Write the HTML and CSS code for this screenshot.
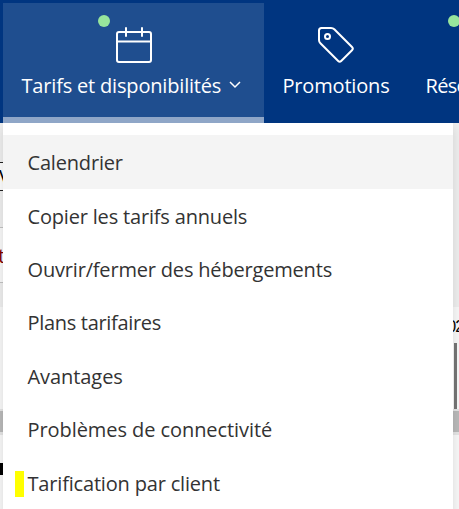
FILE: index.html
```html
<!DOCTYPE html>
<html lang="fr">
<head>
    <meta charset="UTF-8">
    <title>Tarifs et disponibilités</title>
    <link rel="stylesheet" href="styles.css">
</head>
<body>
    <nav class="navbar">
        <a class="nav-item active" href="#">
            <span class="icon-wrap">
                <span class="dot"></span>
                <svg class="icon" viewBox="0 0 38 38">
                    <rect x="2" y="6" width="34" height="30" rx="2"/>
                    <path d="M2 15.500h34M11 2v8M27 2v8"/>
                </svg>
            </span>
            <span class="label">Tarifs et disponibilités</span>
            <svg class="chevron" viewBox="0 0 12 8"><path d="M1 1l5 5 5-5"/></svg>
        </a>
        <a class="nav-item promotions" href="#">
            <span class="icon-wrap">
                <svg class="icon" viewBox="0 0 38 38">
                    <path d="M4.500 2H14Q16 2 17.300 3.300L35 21Q36.600 22.600 35 24.200L24.200 35Q22.700 36.500 21.200 35L3.400 17.300Q2 15.900 2 14V4.500Q2 2 4.500 2Z"/>
                    <circle cx="10.500" cy="10.500" r="2.500"/>
                </svg>
            </span>
            <span class="label">Promotions</span>
        </a>
        <a class="nav-item bookings" href="#">
            <span class="icon-wrap"><span class="dot"></span></span>
            <span class="label">Réservations</span>
        </a>
    </nav>

    <main class="page">
        <div class="filters">
            <div class="filter-space"></div>
            <div class="select">V</div>
            <div class="filter-gap"></div>
            <div class="notice">t</div>
        </div>
        <div class="calendar">
            <span class="date">2025</span>
            <span class="marker"></span>
        </div>
        <div class="scrollbar"></div>
        <div class="room"><span class="room-mark"></span></div>
    </main>

    <ul class="menu">
        <li class="selected"><a href="#">Calendrier</a></li>
        <li><a href="#">Copier les tarifs annuels</a></li>
        <li><a href="#">Ouvrir/fermer des hébergements</a></li>
        <li class="tight"><a href="#">Plans tarifaires</a></li>
        <li class="loose"><a href="#">Avantages</a></li>
        <li class="loose"><a href="#">Problèmes de connectivité</a></li>
        <li class="highlight"><a href="#">Tarification par client</a></li>
    </ul>
</body>
</html>
```
FILE: styles.css
```css
* {
    box-sizing: border-box;
}
body {
    margin: 0;
    width: 459px;
    height: 509px;
    overflow: hidden;
    position: relative;
    font-family: "Open Sans", "Noto Sans", sans-serif;
    background-color: #fafafa;
}
a {
    color: inherit;
    text-decoration: none;
}
.navbar {
    display: flex;
    height: 123px;
    padding: 3px 0 0 3px;
    background-color: #003580;
    color: #fff;
    overflow: hidden;
}
.nav-item {
    display: grid;
    grid-template-columns: auto auto;
    grid-template-rows: 37px 1fr;
    flex: none;
    height: 120px;
    padding: 24px 18px 0 18.5px;
    font-size: 20px;
    line-height: 44px;
    letter-spacing: -0.18px;
    white-space: nowrap;
}
.active {
    width: 261px;
    padding-right: 23px;
    background-color: #1f4e8f;
    border-bottom: 6px solid #8fa6c7;
}
.promotions {
    width: 144px;
}
.bookings {
    width: 176px;
    padding-left: 17.5px;
    letter-spacing: -0.7px;
}
.icon-wrap {
    grid-column: 1 / -1;
    justify-self: center;
    position: relative;
    width: 38px;
    height: 38px;
    margin-top: -1px;
}
.active .icon-wrap {
    margin-left: 5.5px;
}
.bookings .icon-wrap {
    justify-self: start;
    margin-left: 39.5px;
}
.icon {
    display: block;
    width: 38px;
    height: 38px;
    fill: none;
    stroke: #fff;
    stroke-width: 2;
    stroke-linecap: round;
    stroke-linejoin: round;
}
.dot {
    position: absolute;
    left: -17px;
    top: -11px;
    width: 12px;
    height: 12px;
    border-radius: 50%;
    background-color: #97e59c;
}
.chevron {
    width: 12px;
    height: 8px;
    margin-top: 17px;
    justify-self: end;
    fill: none;
    stroke: #fff;
    stroke-width: 1.5;
}

/* Calendar page under the open menu */
.page {
    display: flex;
    flex-direction: column;
    height: 386px;
}
.filters {
    height: 184px;
    background-color: #f0f0f0;
    line-height: 27px;
    font-size: 20px;
}
.filter-space {
    height: 39px;
}
.select {
    height: 29px;
    margin-right: 20px;
    background-color: #fff;
    border: solid #222;
    border-width: 1px 0;
    text-indent: -1px;
}
.filter-gap {
    height: 36px;
}
.notice {
    height: 56px;
    margin-right: 20px;
    padding-top: 14px;
    background-color: #fafafa;
    border: solid #c4c4c4;
    border-width: 1px 0;
    color: #800000;
    text-indent: -2px;
}
.calendar {
    display: flex;
    flex-direction: column;
    align-items: flex-end;
    height: 102px;
}
.date {
    height: 36px;
    margin-right: -12px;
    font-family: "Liberation Sans", sans-serif;
    font-size: 16px;
    line-height: 40px;
    letter-spacing: -1px;
}
.marker {
    width: 3px;
    height: 66px;
    margin-right: 2px;
    background-color: #777;
}
.scrollbar {
    height: 26px;
    border: solid #e6e6e6;
    border-width: 2px 0 3px;
    background-color: #bbb;
}
.room {
    padding-top: 28px;
}
.room-mark {
    display: block;
    width: 3px;
    height: 12px;
    background-color: #000;
}

.menu {
    position: absolute;
    left: 3px;
    top: 123px;
    width: 450px;
    height: 396px;
    margin: 0;
    padding: 12px 0 0;
    list-style: none;
    background-color: #fff;
    box-shadow: 0 3px 12px rgba(0,0,0,0.14);
    clip-path: inset(0 -20px -20px -20px);
    color: #333;
    font-size: 20px;
    letter-spacing: -0.18px;
}
.menu li {
    display: flex;
    align-items: center;
    height: 53.4px;
    padding: 2px 0 0 24.5px;
}
.menu .selected {
    height: 54px;
    margin-bottom: -0.6px;
    padding-top: 0;
    background-color: #f4f4f4;
}
.menu .tight {
    letter-spacing: -0.31px;
}
.menu .loose {
    letter-spacing: -0.07px;
}
.menu .highlight {
    padding-left: 12px;
}
.highlight::before {
    content: "";
    width: 9px;
    height: 26px;
    margin: 2px 3.5px 0 0;
    background-color: #ff0;
}
```
